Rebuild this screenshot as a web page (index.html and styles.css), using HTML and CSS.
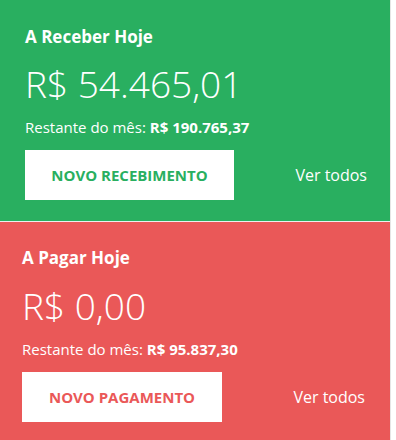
FILE: index.html
```html
<!DOCTYPE html>
<html lang="pt-BR">
<head>
  <meta charset="UTF-8">
  <meta name="viewport" content="width=device-width, initial-scale=1.0">
  <title>Resumo Financeiro</title>
  <link rel="stylesheet" href="styles.css">
</head>
<body>
  <div class="summary">
    <div class="panel panel-receive">
      <h2 class="panel-title">A Receber Hoje</h2>
      <div class="panel-amount">R$ 54.465,01</div>
      <div class="panel-rest">Restante do mês: <strong>R$ 190.765,37</strong></div>
      <div class="panel-actions">
        <button class="panel-btn" type="button">Novo Recebimento</button>
        <a class="panel-link" href="#">Ver todos</a>
      </div>
    </div>
    <div class="panel panel-pay">
      <h2 class="panel-title">A Pagar Hoje</h2>
      <div class="panel-amount">R$ 0,00</div>
      <div class="panel-rest">Restante do mês: <strong>R$ 95.837,30</strong></div>
      <div class="panel-actions">
        <button class="panel-btn" type="button">Novo Pagamento</button>
        <a class="panel-link" href="#">Ver todos</a>
      </div>
    </div>
  </div>
</body>
</html>
```

FILE: styles.css
```css
body {
  font-family: "Open Sans", Arial, sans-serif;
  background: #fff;
  margin: 0;
  padding: 0;
}
.summary {
  width: 390px;
  border-right: 1px solid #e6e6e6;
  display: flex;
  flex-direction: column;
  gap: 1px;
  background: #eee;
}
.panel {
  color: #fff;
  padding: 25px 23px 0 25px;
  height: 221px;
  box-sizing: border-box;
}
.panel-receive {
  background: #29af60;
}
.panel-pay {
  background: #ea5858;
  padding-left: 22px;
  padding-right: 25px;
  padding-top: 24px;
  height: 218px;
}
.panel-title {
  font-size: 17px;
  font-weight: 700;
  line-height: 23px;
  margin: 0;
}
.panel-amount {
  font-size: 37px;
  font-weight: 300;
  line-height: 50px;
  margin-top: 11px;
}
.panel-pay .panel-amount {
  margin-top: 12px;
}
.panel-rest {
  font-size: 15px;
  line-height: 20px;
  margin-top: 8px;
}
.panel-rest strong {
  font-weight: 700;
}
.panel-actions {
  display: flex;
  align-items: center;
  justify-content: space-between;
  margin-top: 13px;
}
.panel-btn {
  font-family: inherit;
  font-size: 15px;
  font-weight: 700;
  text-transform: uppercase;
  background: #fff;
  border: none;
  width: 209px;
  height: 50px;
  cursor: pointer;
}
.panel-receive .panel-btn {
  color: #29af60;
}
.panel-pay .panel-btn {
  color: #ea5858;
  width: 200px;
}
.panel-link {
  color: #fff;
  font-size: 16px;
  text-decoration: none;
}
```
